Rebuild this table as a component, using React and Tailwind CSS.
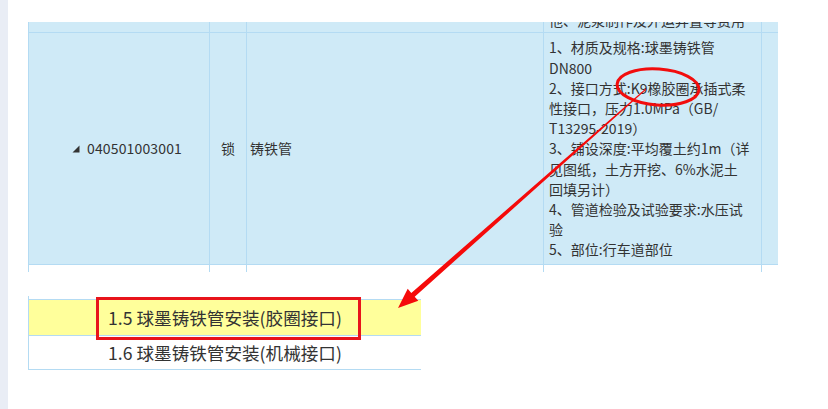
export default function App() {
  const line = 'border-[#b4dbf3]';
  const specLines = [
    '1、材质及规格:球墨铸铁管',
    'DN800',
    '2、接口方式:K9橡胶圈承插式柔',
    '性接口，压力1.0MPa（GB/',
    'T13295-2019）',
    '3、铺设深度:平均覆土约1m（详',
    '见图纸，土方开挖、6%水泥土',
    '回填另计）',
    '4、管道检验及试验要求:水压试',
    '验',
    '5、部位:行车道部位',
  ];

  return (
    <div className="relative flex w-[828px] h-[409px] bg-white overflow-hidden text-[#333] font-['Noto_Sans_CJK_SC',sans-serif]">
      {/* left rail */}
      <div className="w-[8px] h-full bg-[#e9edf5]" />

      <div className="flex-1 pl-[20px] pt-[22px]">
        {/* list table, scrolled */}
        <div className="w-[750px] overflow-hidden">
          <div className={`grid grid-cols-[181px_37px_297px_218px_17px] h-[11px] bg-[#cfeaf7] border-b ${line}`}>
            <div className={`border-l ${line}`} />
            <div className={`border-l ${line}`} />
            <div className={`border-l ${line}`} />
            <div className={`border-l ${line} overflow-hidden flex items-end pl-[5px]`}>
              <span className="text-[14px] leading-[20px] whitespace-nowrap mb-[2px]">他、泥浆制作及外运弃置等费用</span>
            </div>
            <div className={`border-l ${line}`} />
          </div>

          <div className={`grid grid-cols-[181px_37px_297px_218px_17px] h-[232px] bg-[#cfeaf7] border-b ${line} text-[14px]`}>
            <div className={`border-l ${line} flex items-center pl-[43px]`}>
              <svg width="8" height="8" viewBox="0 0 8 8" className="mr-[7px]">
                <polygon points="7.5,0.5 7.5,7.5 0.5,7.5" fill="#333" />
              </svg>
              <span className="tracking-[0.15px]">040501003001</span>
            </div>
            <div className={`border-l ${line} flex items-center justify-center`}>锁</div>
            <div className={`border-l ${line} flex items-center pl-[3px]`}>铸铁管</div>
            <div className={`border-l ${line} flex flex-col justify-center pl-[5px]`}>
              {specLines.map((t, i) => (
                <div key={i} className="leading-[20.2px] whitespace-nowrap">{t}</div>
              ))}
            </div>
            <div className={`border-l ${line}`} />
          </div>

          <div className="grid grid-cols-[181px_37px_297px_218px_17px] h-[7px] bg-white">
            <div className={`border-l ${line}`} />
            <div className={`border-l ${line}`} />
            <div className={`border-l ${line}`} />
            <div className={`border-l ${line}`} />
            <div className={`border-l ${line}`} />
          </div>
        </div>

        {/* category table */}
        <div className={`mt-[24px] w-[393px] border-l ${line} pt-[3px]`}>
          <div className={`relative h-[37px] bg-[#ffff9b] border-y ${line} flex items-center justify-center text-[17.6px] pt-[2px]`}>
            1.5 球墨铸铁管安装(胶圈接口)
            <div className="absolute left-[67px] top-[-3px] w-[265px] h-[43px] border-[3px] border-[#e8141b]" />
          </div>
          <div className={`h-[34px] border-b ${line} flex items-center justify-center text-[17.6px] pt-[2px]`}>
            1.6 球墨铸铁管安装(机械接口)
          </div>
        </div>
      </div>

      {/* annotation overlay */}
      <svg className="absolute left-0 top-0 pointer-events-none" width="828" height="409" viewBox="0 0 828 409">
        <ellipse cx="658" cy="87" rx="41" ry="18" transform="rotate(4 658 87)" fill="none" stroke="#f20d0d" strokeWidth="3" />
        <polygon
          points="646.3,89.4 414.7,296.7 418.3,300.8 398,308 407.7,288.8 411.3,292.9 645.7,88.6"
          fill="#f50a0a"
        />
      </svg>
    </div>
  );
}
